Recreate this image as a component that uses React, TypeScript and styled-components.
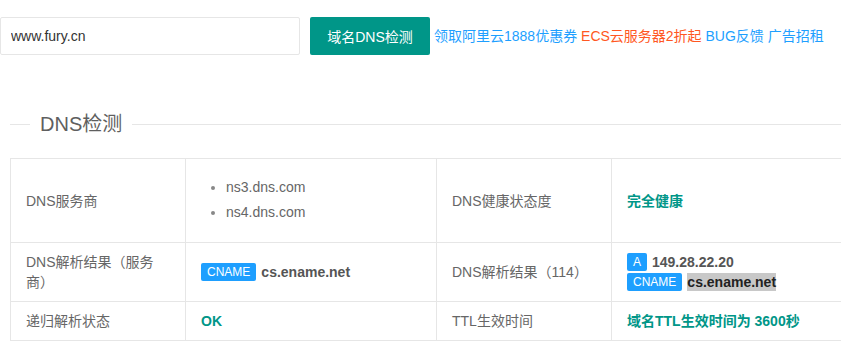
import React from "react";
import styled, { createGlobalStyle } from "styled-components";

const Global = createGlobalStyle`
  html, body { margin: 0; padding: 0; background: #fff; overflow: hidden; }
  body { font-family: "Liberation Sans", "Noto Sans CJK SC", sans-serif; font-size: 14px; color: #666; }
`;

const Page = styled.div`
  width: 841px;
  overflow: hidden;
`;

const SearchBar = styled.div`
  display: flex;
  align-items: center;
  margin-top: 17px;
  height: 38px;
`;

const Input = styled.input`
  box-sizing: border-box;
  width: 300px;
  height: 38px;
  border: 1px solid #e6e6e6;
  border-radius: 2px;
  padding: 0 10px;
  font: inherit;
  font-size: 14px;
  color: #333;
  outline: none;
`;

const Button = styled.button`
  box-sizing: border-box;
  margin-left: 10px;
  width: 120px;
  height: 38px;
  border: none;
  border-radius: 2px;
  background: #009688;
  color: #fff;
  font: inherit;
  font-size: 14px;
  padding: 0;
`;

const Links = styled.div`
  margin-left: 4px;
  white-space: nowrap;
  line-height: 20px;
`;

const Link = styled.a<{ $tone: "blue" | "red" }>`
  color: ${(p) => (p.$tone === "red" ? "#FF5722" : "#1E9FFF")};
  text-decoration: none;
`;

const Section = styled.div`
  margin-left: 10px;
`;

const Legend = styled.div`
  display: flex;
  align-items: center;
  margin-top: 55px;
  height: 28px;
`;

const Rule = styled.div<{ $grow?: boolean }>`
  height: 1px;
  background: #e6e6e6;
  ${(p) => (p.$grow ? "flex: 1;" : "width: 20px;")}
`;

const LegendText = styled.span`
  padding: 0 10px;
  font-size: 20px;
  line-height: 28px;
  color: #5f5f5f;
`;

const Table = styled.table`
  margin-top: 20px;
  border-collapse: collapse;
  table-layout: fixed;
  width: 1000px;
`;

const Cell = styled.td`
  border: 1px solid #e6e6e6;
  padding: 9px 15px;
  line-height: 20px;
  font-size: 14px;
  color: #666;
  vertical-align: middle;
`;

const Strong = styled.span<{ $green?: boolean }>`
  font-weight: bold;
  color: ${(p) => (p.$green ? "#009688" : "#555")};
`;

const NsList = styled.ul`
  margin: 7px 0 8px;
  padding-left: 25px;
  list-style: disc;
  li { line-height: 25px; color: #666; }
  li::marker { color: #888; font-size: 13px; }
`;

const Badge = styled.span`
  display: inline-block;
  height: 18px;
  line-height: 18px;
  padding: 0 6px;
  border-radius: 2px;
  background: #1E9FFF;
  color: #fff;
  font-size: 12px;
  vertical-align: middle;
  margin-right: 5px;
`;

const Record = styled.div`
  display: flex;
  align-items: center;
  height: 20px;
`;

const Highlight = styled.span`
  display: inline-block;
  line-height: 18px;
  background: #c8c8c8;
  color: #222;
  font-weight: bold;
`;

export default function App() {
  return (
    <Page>
      <Global />
      <SearchBar>
        <Input defaultValue="www.fury.cn" />
        <Button>域名DNS检测</Button>
        <Links>
          <Link $tone="blue">领取阿里云1888优惠券</Link>{" "}
          <Link $tone="red">ECS云服务器2折起</Link>{" "}
          <Link $tone="blue">BUG反馈</Link>{" "}
          <Link $tone="blue">广告招租</Link>
        </Links>
      </SearchBar>
      <Section>
        <Legend>
          <Rule />
          <LegendText>DNS检测</LegendText>
          <Rule $grow />
        </Legend>
        <Table>
          <colgroup>
            <col style={{ width: 175 }} />
            <col style={{ width: 251 }} />
            <col style={{ width: 175 }} />
            <col style={{ width: 399 }} />
          </colgroup>
          <tbody>
            <tr>
              <Cell>DNS服务商</Cell>
              <Cell>
                <NsList>
                  <li>ns3.dns.com</li>
                  <li>ns4.dns.com</li>
                </NsList>
              </Cell>
              <Cell>DNS健康状态度</Cell>
              <Cell>
                <Strong $green>完全健康</Strong>
              </Cell>
            </tr>
            <tr>
              <Cell>DNS解析结果（服务商）</Cell>
              <Cell>
                <Record>
                  <Badge>CNAME</Badge>
                  <Strong>cs.ename.net</Strong>
                </Record>
              </Cell>
              <Cell>DNS解析结果（114）</Cell>
              <Cell>
                <Record>
                  <Badge>A</Badge>
                  <Strong>149.28.22.20</Strong>
                </Record>
                <Record>
                  <Badge>CNAME</Badge>
                  <Highlight>cs.ename.net</Highlight>
                </Record>
              </Cell>
            </tr>
            <tr>
              <Cell>递归解析状态</Cell>
              <Cell>
                <Strong $green>OK</Strong>
              </Cell>
              <Cell>TTL生效时间</Cell>
              <Cell>
                <Strong $green>域名TTL生效时间为 3600秒</Strong>
              </Cell>
            </tr>
          </tbody>
        </Table>
      </Section>
    </Page>
  );
}
